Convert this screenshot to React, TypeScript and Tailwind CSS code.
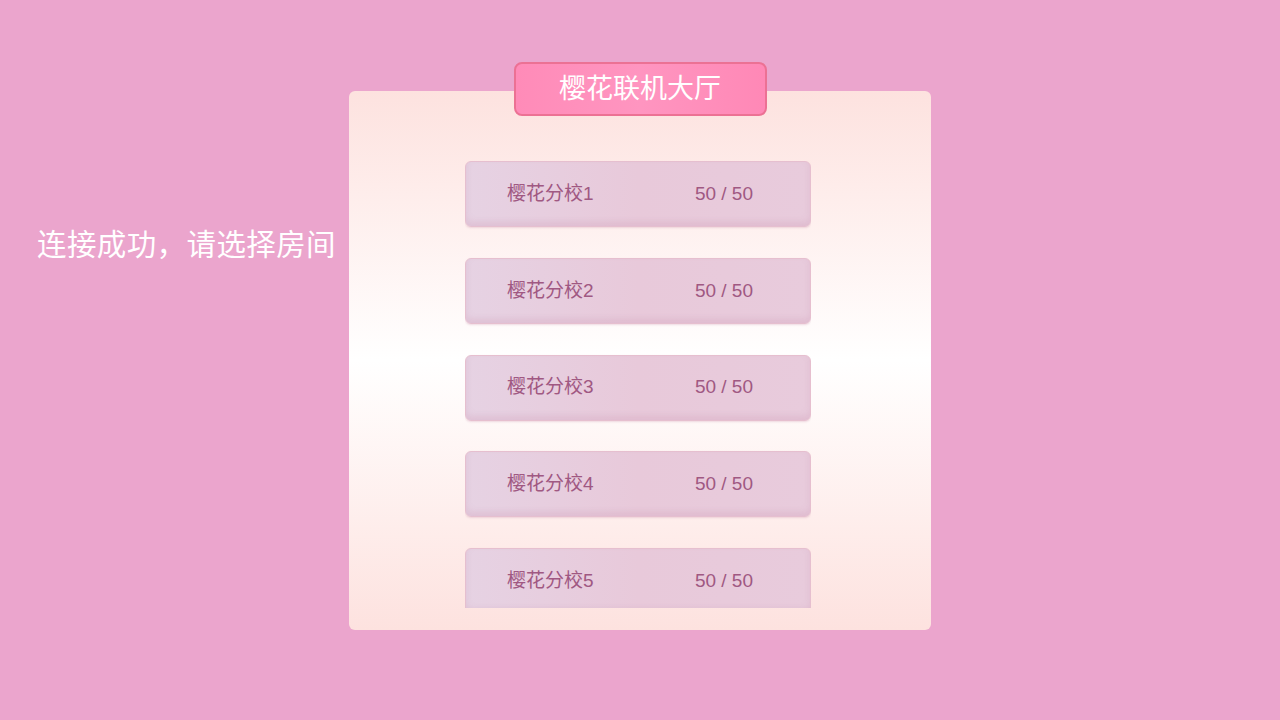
const rooms = [
  { name: '樱花分校1', count: '50 / 50' },
  { name: '樱花分校2', count: '50 / 50' },
  { name: '樱花分校3', count: '50 / 50' },
  { name: '樱花分校4', count: '50 / 50' },
  { name: '樱花分校5', count: '50 / 50' },
];

function RoomRow({ name, count }: { name: string; count: string }) {
  return (
    <div className="flex h-[66px] shrink-0 items-center justify-between rounded-md border border-[#e6bfcf] bg-gradient-to-r from-[#e6d2e3] via-[#e8c9da] to-[#e8cbdc] pl-[41px] pr-[57px] text-[19px] text-[#a05882] shadow-[inset_0_-4px_6px_rgba(210,160,185,0.35),0_1px_2px_rgba(200,140,170,0.3)]">
      <span>{name}</span>
      <span>{count}</span>
    </div>
  );
}

export default function App() {
  return (
    <div
      className="flex h-[720px] w-[1280px] items-start bg-[#eba5cd] pt-[62px]"
      style={{ fontFamily: '"Liberation Sans", "Noto Sans CJK SC", sans-serif' }}
    >
      <div className="w-[349px] shrink-0 pl-[37px] pt-[165px]">
        <p className="text-[29.5px] leading-[36px] tracking-[0.4px] text-white">连接成功，请选择房间</p>
      </div>
      <div className="flex w-[582px] flex-col items-center">
        <div className="relative z-10 flex h-[54px] w-[253px] items-center justify-center rounded-lg border-2 border-[#ec7194] bg-gradient-to-r from-[#ff8bb8] via-[#ff95c0] to-[#ff88b6] text-[27px] text-white">
          樱花联机大厅
        </div>
        <div className="-mt-[25px] h-[539px] w-full rounded-md bg-gradient-to-b from-[#fde2df] via-white to-[#fde2df] pl-[116px] pr-[120px] pt-[70px]">
          <div className="flex h-[447px] flex-col gap-[30.75px] overflow-hidden">
            {rooms.map((r) => (
              <RoomRow key={r.name} name={r.name} count={r.count} />
            ))}
          </div>
        </div>
      </div>
    </div>
  );
}
